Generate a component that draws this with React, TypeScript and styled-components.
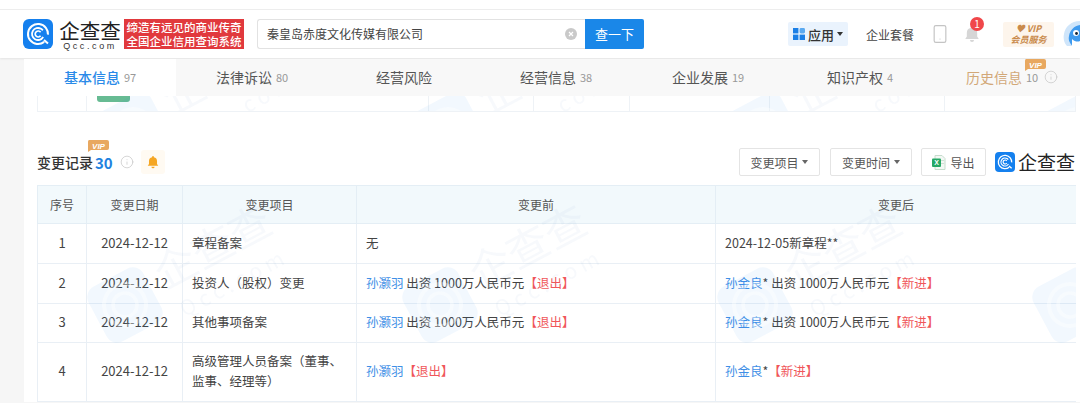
import React from "react"
import styled, { createGlobalStyle } from "styled-components"
import { Info, Smartphone } from "lucide-react"

const GlobalStyle = createGlobalStyle`
  html, body { margin: 0; padding: 0; background: #fff; }
  body { font-family: "Noto Sans CJK SC", "Noto Sans", sans-serif; color: #333; }
  * { box-sizing: border-box; }
`

const tabs = [
  { name: "基本信息", count: "97", active: true },
  { name: "法律诉讼", count: "80" },
  { name: "经营风险" },
  { name: "经营信息", count: "38" },
  { name: "企业发展", count: "19" },
  { name: "知识产权", count: "4" },
  { name: "历史信息", count: "10", vip: true },
]

const stubCols = [49, 342, 105, 96, 140, 175, 132]

function LogoMark({ size }: { size: number }) {
  return (
    <svg width={size} height={size} viewBox="0 0 30 30">
      <rect width="30" height="30" rx="6" fill="#1580ee" />
      <circle cx="15" cy="15" r="10" fill="none" stroke="#fff" strokeWidth="2" strokeDasharray="54 9" transform="rotate(52 15 15)" />
      <circle cx="15" cy="15" r="6" fill="none" stroke="#fff" strokeWidth="1.8" strokeDasharray="30 8" transform="rotate(30 15 15)" />
      <path d="M17.6 13.2a3 3 0 1 0 0 3.6" fill="none" stroke="#fff" strokeWidth="1.7" />
      <path d="M21 21l4 3.5" stroke="#fff" strokeWidth="2" />
    </svg>
  )
}

function VipTag() {
  return (
    <svg width="22" height="12" viewBox="0 0 22 12">
      <path d="M2 0h18a2 2 0 0 1 2 2v6a2 2 0 0 1-2 2H4l-3 2V2a2 2 0 0 1 1-2z" fill="#e8a860" />
      <text x="11.5" y="8.6" textAnchor="middle" fontSize="8" fontWeight="700" fontStyle="italic" fontFamily="Liberation Sans" fill="#fff">VIP</text>
    </svg>
  )
}

function BellIcon({ color, size }: { color: string; size: number }) {
  return (
    <svg width={size} height={size} viewBox="0 0 16 16">
      <path d="M8 1a1 1 0 0 1 1 1v.6A4.4 4.4 0 0 1 12.6 7v3.2L14 12.4H2l1.4-2.2V7A4.4 4.4 0 0 1 7 2.6V2a1 1 0 0 1 1-1z" fill={color} />
      <path d="M6.2 13.3h3.6a1.8 1.8 0 0 1-3.6 0z" fill={color} />
    </svg>
  )
}

function ClearIcon() {
  return (
    <svg width="12" height="12" viewBox="0 0 12 12">
      <circle cx="6" cy="6" r="6" fill="#c9c9c9" />
      <path d="M4 4l4 4M8 4l-4 4" stroke="#fff" strokeWidth="1.2" />
    </svg>
  )
}

function AppsIcon() {
  return (
    <svg width="12" height="12" viewBox="0 0 12 12">
      <rect width="5.4" height="5.4" fill="#1b7fe6" />
      <rect x="6.6" width="5.4" height="5.4" rx="1.4" fill="#5aa9f0" />
      <rect y="6.6" width="5.4" height="5.4" fill="#1b7fe6" />
      <rect x="6.6" y="6.6" width="5.4" height="5.4" fill="#1b7fe6" />
    </svg>
  )
}

function ExcelIcon() {
  return (
    <svg width="14" height="15" viewBox="0 0 14 15">
      <path d="M3 .5h7l3 3v11H3z" fill="#f3f8f4" stroke="#c6dccd" />
      <rect x="9" y="5" width="3" height="1" fill="#cfe0d4" />
      <rect x="9" y="8" width="3" height="1" fill="#cfe0d4" />
      <rect y="3.5" width="9" height="8.5" rx="1" fill="#26a866" />
      <text x="4.5" y="10.2" textAnchor="middle" fontSize="7" fontWeight="700" fontFamily="Liberation Sans" fill="#fff">X</text>
    </svg>
  )
}

function Avatar() {
  return (
    <svg width="17" height="26" viewBox="0 0 17 26">
      <path d="M17 0C8 0 2 6 1 13c-1 4 0 9 3 12h13z" fill="#cfe5fa" />
      <path d="M17 4c-6 1-10 5-11 11-1 4 1 8 4 10h7z" fill="#3f9bef" />
      <circle cx="13" cy="12" r="3" fill="#fff" />
      <circle cx="13.5" cy="12.5" r="1.4" fill="#123" />
      <path d="M9 18c3 3 6 3 8 2v5H9z" fill="#fff" />
    </svg>
  )
}

// faint brand tile repeated every 315px over a block, clipped to that block
function Watermark({ id, x, y }: { id: string; x: number; y: number }) {
  return (
    <WatermarkLayer width="100%" height="100%">
      <defs>
        <pattern id={id} x={x} y={y} width="315" height="300" patternUnits="userSpaceOnUse">
          <g transform="translate(88 120) rotate(-28)">
            <rect x="-31" y="-31" width="62" height="62" rx="12" fill="#1580ee" opacity="0.055" />
            <circle r="21" fill="none" stroke="#fff" strokeWidth="4" opacity="0.35" />
            <circle r="12" fill="none" stroke="#fff" strokeWidth="3.5" opacity="0.35" />
            <text x="42" y="5" fontSize="42" fill="#4a7fb0" opacity="0.045">企查查</text>
            <text x="47" y="39" fontSize="21" letterSpacing="5" fill="#4a7fb0" opacity="0.045">Qcc.com</text>
          </g>
        </pattern>
      </defs>
      <rect width="100%" height="100%" fill={`url(#${id})`} />
    </WatermarkLayer>
  )
}

export default function App() {
  return (
    <Page>
      <GlobalStyle />
      <TopStrip />
      <Header>
        <LogoMark size={30} />
        <Brand>
          <BrandName>企查查</BrandName>
          <BrandUrl>Qcc.com</BrandUrl>
        </Brand>
        <Slogan>
          <span>缔造有远见的商业传奇</span>
          <span>全国企业信用查询系统</span>
        </Slogan>
        <Search>
          <SearchText>秦皇岛赤度文化传媒有限公司</SearchText>
          <ClearSlot><ClearIcon /></ClearSlot>
          <SearchButton>查一下</SearchButton>
        </Search>
        <HeaderRight>
          <AppsButton><AppsIcon />应用<Caret $color="#333" /></AppsButton>
          <PlanLink>企业套餐</PlanLink>
          <PhoneSlot><Smartphone size={20} strokeWidth={1.4} color="#c4c4c4" /></PhoneSlot>
          <BellSlot>
            <BellIcon color="#d6d6d6" size={18} />
            <BellBadge>1</BellBadge>
          </BellSlot>
          <VipBox>
            <VipLine>♥ VIP</VipLine>
            <VipLine>会员服务</VipLine>
          </VipBox>
          <Avatar />
        </HeaderRight>
      </Header>
      <Main>
        <TabBar>
          {tabs.map((t) => (
            <Tab key={t.name} $active={t.active} $vip={t.vip}>
              {t.name}
              {t.count && <TabCount>{t.count}</TabCount>}
              {t.vip && <TabInfo><Info size={14} strokeWidth={1.2} color="#c4c4c4" /></TabInfo>}
              {t.vip && <TabVip><VipTag /></TabVip>}
            </Tab>
          ))}
        </TabBar>
        <StubRow>
          {stubCols.map((w, i) => (
            <StubCell key={i} $width={w}>{i === 1 && <GreenTag />}</StubCell>
          ))}
          <Watermark id="wm-stub" x={7} y={-86} />
        </StubRow>
        <SectionHead>
          <SectionTitle>
            变更记录<TitleCount>30</TitleCount>
            <TitleVip><VipTag /></TitleVip>
            <TitleInfo><Info size={14} strokeWidth={1.2} color="#c4c4c4" /></TitleInfo>
            <AlertBox><BellIcon color="#f5a623" size={14} /></AlertBox>
          </SectionTitle>
          <Tools>
            <ToolButton $width={81}>变更项目<Caret $color="#666" /></ToolButton>
            <ToolButton $width={82}>变更时间<Caret $color="#666" /></ToolButton>
            <ToolButton $width={65}><ExcelIcon />导出</ToolButton>
            <SectionBrand>
              <LogoMark size={20} />
              <SectionBrandName>企查查</SectionBrandName>
            </SectionBrand>
          </Tools>
        </SectionHead>
        <TableWrap>
          <Table>
            <colgroup>
              <col width="49" />
              <col width="96" />
              <col width="174" />
              <col width="359" />
              <col width="361" />
            </colgroup>
            <thead>
              <HeadRow>
                <HeadCell>序号</HeadCell>
                <HeadCell>变更日期</HeadCell>
                <HeadCell>变更项目</HeadCell>
                <HeadCell>变更前</HeadCell>
                <HeadCell>变更后</HeadCell>
              </HeadRow>
            </thead>
            <tbody>
              <BodyRow $height={40}>
                <CenterCell>1</CenterCell>
                <CenterCell>2024-12-12</CenterCell>
                <Cell>章程备案</Cell>
                <Cell>无</Cell>
                <Cell>2024-12-05新章程**</Cell>
              </BodyRow>
              <BodyRow $height={40}>
                <CenterCell>2</CenterCell>
                <CenterCell>2024-12-12</CenterCell>
                <Cell>投资人（股权）变更</Cell>
                <Cell><Person>孙灏羽</Person> 出资 1000万人民币元<Status>【退出】</Status></Cell>
                <Cell><Person>孙金良</Person>* 出资 1000万人民币元<Status>【新进】</Status></Cell>
              </BodyRow>
              <BodyRow $height={39}>
                <CenterCell>3</CenterCell>
                <CenterCell>2024-12-12</CenterCell>
                <Cell>其他事项备案</Cell>
                <Cell><Person>孙灏羽</Person> 出资 1000万人民币元<Status>【退出】</Status></Cell>
                <Cell><Person>孙金良</Person>* 出资 1000万人民币元<Status>【新进】</Status></Cell>
              </BodyRow>
              <BodyRow $height={59}>
                <CenterCell>4</CenterCell>
                <CenterCell>2024-12-12</CenterCell>
                <Cell>高级管理人员备案（董事、监事、经理等）</Cell>
                <Cell><Person>孙灏羽</Person><Status>【退出】</Status></Cell>
                <Cell><Person>孙金良</Person>*<Status>【新进】</Status></Cell>
              </BodyRow>
            </tbody>
          </Table>
          <Watermark id="wm-table" x={0} y={0} />
        </TableWrap>
      </Main>
    </Page>
  )
}

const Page = styled.div`
  width: 1080px;
  height: 403px;
  overflow: hidden;
  background: #f6f6f6;
`

const WatermarkLayer = styled.svg`
  position: absolute;
  inset: 0;
  pointer-events: none;
`

const TopStrip = styled.div`
  height: 10px;
  background: #fff;
  border-bottom: 1px solid #eee;
`

const Header = styled.header`
  display: flex;
  align-items: center;
  height: 48px;
  padding-left: 23px;
  background: #fff;
  box-shadow: 0 1px 2px rgba(0, 0, 0, 0.08);
  & > * { flex: none; }
`

const Brand = styled.div`
  display: flex;
  flex-direction: column;
  align-items: center;
  width: 62px;
  margin-left: 6px;
  white-space: nowrap;
`

const BrandName = styled.div`
  font-size: 20.5px;
  line-height: 24px;
  color: #222;
`

const BrandUrl = styled.div`
  font-family: "Liberation Sans", sans-serif;
  font-size: 9px;
  line-height: 9px;
  letter-spacing: 2.6px;
  color: #333;
`

const Slogan = styled.div`
  display: flex;
  flex-direction: column;
  align-items: center;
  justify-content: center;
  width: 120px;
  height: 30px;
  margin-left: 3px;
  background: #e1393d;
  color: #fff;
  font-size: 11.5px;
  line-height: 14px;
  font-weight: 500;
  white-space: nowrap;
`

const Search = styled.div`
  display: flex;
  align-items: center;
  width: 387px;
  height: 30px;
  margin-left: 13px;
`

const SearchText = styled.div`
  flex: 1;
  height: 100%;
  padding-left: 9px;
  border: 1px solid #e2e2e2;
  border-right: 0;
  border-radius: 3px 0 0 3px;
  font-size: 12px;
  line-height: 28px;
  color: #444;
`

const ClearSlot = styled.div`
  display: flex;
  align-items: center;
  height: 100%;
  padding-right: 8px;
  border-top: 1px solid #e2e2e2;
  border-bottom: 1px solid #e2e2e2;
  margin-left: -1px;
`

const SearchButton = styled.div`
  width: 59px;
  height: 100%;
  background: #1a87e8;
  border-radius: 0 2px 2px 0;
  color: #fff;
  font-size: 13px;
  line-height: 30px;
  text-align: center;
`

const HeaderRight = styled.div`
  display: flex;
  align-items: center;
  margin-left: 144px;
`

const AppsButton = styled.div`
  display: flex;
  align-items: center;
  gap: 3px;
  width: 60px;
  height: 24px;
  padding-left: 5px;
  background: #eaf3fd;
  border-radius: 2px;
  font-size: 13px;
  font-weight: 500;
  color: #333;
`

const PlanLink = styled.div`
  width: 49px;
  margin-left: 18px;
  font-size: 12px;
  white-space: nowrap;
  color: #444;
`

const PhoneSlot = styled.div`
  display: flex;
  margin-left: 15px;
`

const BellSlot = styled.div`
  position: relative;
  display: flex;
  margin-left: 13px;
`

const BellBadge = styled.span`
  position: absolute;
  top: -8px;
  left: 7px;
  width: 14px;
  height: 14px;
  border-radius: 50%;
  background: #f0474a;
  color: #fff;
  font-size: 10px;
  line-height: 14px;
  text-align: center;
`

const VipBox = styled.div`
  display: flex;
  flex-direction: column;
  align-items: center;
  justify-content: center;
  width: 51px;
  height: 25px;
  margin: 0 9px 0 22px;
  background: #fdf5ec;
  border-radius: 2px;
`

const VipLine = styled.div`
  font-size: 9px;
  line-height: 11px;
  font-weight: 700;
  font-style: italic;
  color: #c98a4b;
`

const Main = styled.main`
  margin: 1px 0 0 24px;
  background: #fff;
`

const TabBar = styled.nav`
  display: flex;
  height: 37px;
  background: #f8f8f8;
`

const Tab = styled.div<{ $active?: boolean; $vip?: boolean }>`
  position: relative;
  flex: 0 0 152px;
  display: flex;
  align-items: center;
  justify-content: center;
  padding-bottom: 2px;
  font-size: 14px;
  background: ${(p) => (p.$active ? "#fff" : "transparent")};
  color: ${(p) => (p.$active ? "#2a8ae8" : p.$vip ? "#d2a878" : "#555")};
  font-weight: ${(p) => (p.$active ? 500 : 400)};
`

const TabCount = styled.span`
  margin-left: 4px;
  font-size: 11px;
  font-weight: 400;
  color: #999;
`

const TabInfo = styled.span`
  display: flex;
  margin-left: 6px;
`

const TabVip = styled.span`
  position: absolute;
  top: 0;
  left: 88px;
  display: flex;
`

const StubRow = styled.div`
  position: relative;
  overflow: hidden;
  display: flex;
  width: 1039px;
  height: 16px;
  margin-left: 13px;
  border: 1px solid #eef2f6;
  border-top: 0;
`

const StubCell = styled.div<{ $width: number }>`
  flex: 0 0 ${(p) => p.$width}px;
  border-right: 1px solid #eef2f6;
  &:last-child { flex: 1; border-right: 0; }
`

const GreenTag = styled.div`
  width: 33px;
  height: 6px;
  margin-left: 10px;
  background: #67bb93;
  border-radius: 0 0 3px 3px;
`

const SectionHead = styled.div`
  display: flex;
  align-items: center;
  justify-content: space-between;
  height: 73px;
  padding: 27px 5px 0 13px;
`

const SectionTitle = styled.h2`
  position: relative;
  display: flex;
  align-items: center;
  margin: 0;
  font-size: 14px;
  font-weight: 500;
  color: #333;
`

const TitleCount = styled.span`
  margin-left: 2px;
  font-size: 15px;
  font-weight: 700;
  color: #1f82e0;
`

const TitleVip = styled.span`
  position: absolute;
  top: -10px;
  left: 50px;
  display: flex;
`

const TitleInfo = styled.span`
  display: flex;
  margin-left: 7px;
`

const AlertBox = styled.span`
  display: flex;
  align-items: center;
  justify-content: center;
  width: 24px;
  height: 24px;
  margin-left: 7px;
  background: #fffaf2;
  border-radius: 3px;
`

const Tools = styled.div`
  display: flex;
  align-items: center;
  gap: 9px;
`

const ToolButton = styled.div<{ $width: number }>`
  display: flex;
  align-items: center;
  justify-content: center;
  gap: 4px;
  width: ${(p) => p.$width}px;
  height: 28px;
  border: 1px solid #e4e4e4;
  border-radius: 2px;
  font-size: 12px;
  color: #555;
  &:first-child { margin-right: 1px; }
`

const Caret = styled.span<{ $color: string }>`
  width: 0;
  height: 0;
  border-left: 3.5px solid transparent;
  border-right: 3.5px solid transparent;
  border-top: 4px solid ${(p) => p.$color};
`

const SectionBrand = styled.div`
  display: flex;
  align-items: center;
  gap: 3px;
`

const SectionBrandName = styled.span`
  font-size: 19px;
  line-height: 24px;
  color: #222;
`

const TableWrap = styled.div`
  position: relative;
  overflow: hidden;
  width: 1039px;
  margin-left: 13px;
`

const Table = styled.table`
  width: 1039px;
  table-layout: fixed;
  border-collapse: collapse;
  font-size: 12.5px;
`

const HeadRow = styled.tr`
  height: 38px;
  background: #f2f9fc;
`

const HeadCell = styled.th`
  border: 1px solid #e4eef5;
  font-size: 12px;
  font-weight: 400;
  color: #555;
`

const BodyRow = styled.tr<{ $height: number }>`
  height: ${(p) => p.$height}px;
`

const Cell = styled.td`
  padding: 0 9px 2px;
  border: 1px solid #e9eff5;
  line-height: 20px;
  color: #444;
`

const CenterCell = styled(Cell)`
  text-align: center;
  font-size: 13px;
`

const Person = styled.span`
  color: #3f8fe6;
`

const Status = styled.span`
  color: #f0565a;
`
